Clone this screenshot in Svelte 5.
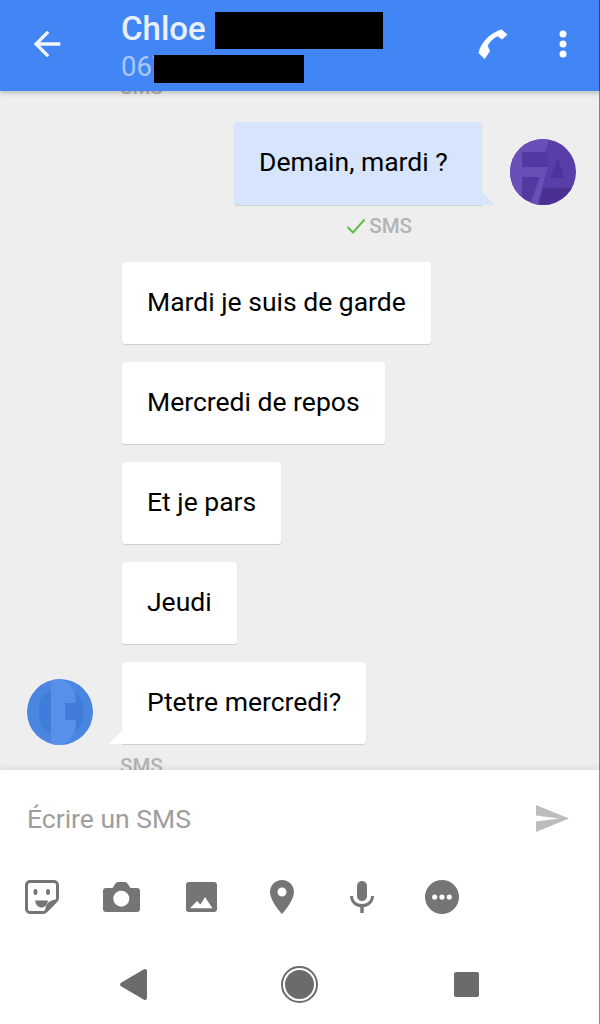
<script lang="ts">
	type Message = {
		text: string;
		mine?: boolean;
		avatar?: boolean;
		status?: string;
		checked?: boolean;
	};

	const messages: Message[] = [
		{ text: 'Demain, mardi ?', mine: true, avatar: true, status: 'SMS', checked: true },
		{ text: 'Mardi je suis de garde' },
		{ text: 'Mercredi de repos' },
		{ text: 'Et je pars' },
		{ text: 'Jeudi' },
		{ text: 'Ptetre mercredi?', avatar: true, status: 'SMS' }
	];
</script>

<div class="screen">
	<header class="topbar">
		<button type="button" class="back" aria-label="Retour">
			<svg viewBox="0 0 24 24" width="40" height="40"><path d="M20 11H7.83l5.59-5.59L12 4l-8 8 8 8 1.41-1.41L7.83 13H20v-2z" /></svg>
		</button>
		<div class="contact">
			<div class="name">Chloe <span class="redacted name-mask"></span></div>
			<div class="number">067<span class="redacted number-mask"></span></div>
		</div>
		<button type="button" class="call" aria-label="Appeler">
			<svg viewBox="0 0 30 31" width="30" height="31"><path d="M0.800 24C2.500 15 11 4.500 23.500 0.800L29.200 5.500 24 10.200 19.500 7C15 9 11.200 13 9.300 17L11.800 22 6.500 29.800z" stroke="#fff" stroke-width="0.600" stroke-linejoin="round" /></svg>
		</button>
		<button type="button" class="more" aria-label="Plus">
			<svg viewBox="0 0 10 28" width="10" height="28"><circle cx="5" cy="4" r="3.500" /><circle cx="5" cy="14" r="3.500" /><circle cx="5" cy="24" r="3.500" /></svg>
		</button>
	</header>

	<main class="thread">
		<div class="status first">SMS</div>
		{#each messages as message}
			<div class="row" class:mine={message.mine}>
				{#if message.avatar && !message.mine}
					<svg class="avatar" viewBox="0 0 66 66" width="66" height="66">
						<rect width="66" height="66" fill="#4a86e0" />
						<rect x="12" y="13" width="44" height="40" rx="14" fill="#3f7cdc" />
						<path d="M24 0h9C44 3 49 12 49 24H38v17h11C49 54 44 63 33 66h-9z" fill="#5790e8" />
					</svg>
				{:else if !message.mine}
					<span class="avatar-space"></span>
				{/if}
				<div class="bubble" class:tail={message.avatar}>{message.text}</div>
				{#if message.avatar && message.mine}
					<svg class="avatar" viewBox="0 0 66 66" width="66" height="66">
						<rect width="66" height="66" fill="#5a3ea8" />
						<path d="M0 0h39L35 13H12v49H0z" fill="#6a4fb8" />
						<path d="M12 13h26v15H12zM12 38h18l-10 24h-8z" fill="#5438a2" />
						<path d="M12 28h26l-3 10H12zM30 38h5l-7 28h-8z" fill="#694eb6" />
						<path d="M48 19l6 20H40z" fill="#4f329b" />
						<path d="M33 49h33v17H28z" fill="#4b2f92" />
					</svg>
				{/if}
			</div>
			{#if message.status}
				<div class="status" class:sent={message.mine} class:last={!message.mine}>
					{#if message.checked}
						<svg viewBox="0 0 20 16" width="20" height="16"><path d="M1.500 9l5.500 5.500L18.500 1.500" fill="none" stroke="#62bd4a" stroke-width="2" /></svg>
					{/if}
					{message.status}
				</div>
			{/if}
		{/each}
	</main>

	<footer class="composer">
		<div class="input-row">
			<span class="placeholder">Écrire un SMS</span>
			<svg class="send" viewBox="0 0 33 27" width="33" height="27"><path d="M0 0l33 13.500L0 27V16.500l23-3-23-3z" /></svg>
		</div>
		<div class="tools">
			<svg viewBox="0 0 34 34" width="34" height="34">
				<path d="M5 1.500h24A3.500 3.500 0 0 1 32.500 5v13c0 1-.5 2-1.200 2.800L21 31.300c-.8.800-1.800 1.200-2.800 1.200H5A3.500 3.500 0 0 1 1.500 29V5A3.500 3.500 0 0 1 5 1.500z" fill="none" stroke="#757575" stroke-width="3" />
				<path d="M32 19.500c-7 0-12 4-12 12.500l3-1 8-8z" />
				<ellipse cx="10.500" cy="12" rx="2" ry="3" /><ellipse cx="23" cy="12" rx="2" ry="3" />
				<path d="M10 20.500h13c-1 5-3.500 7-6.500 7s-5.500-2-6.500-7z" />
			</svg>
			<svg viewBox="0 0 37 30" width="37" height="30"><path fill-rule="evenodd" d="M3 6h6.500l3-4.500A3 3 0 0 1 15 0h7a3 3 0 0 1 2.500 1.500l3 4.500H34a3 3 0 0 1 3 3v18a3 3 0 0 1-3 3H3a3 3 0 0 1-3-3V9a3 3 0 0 1 3-3zm15.300 2.700a8 8 0 1 0 0 16 8 8 0 0 0 0-16z" /></svg>
			<svg viewBox="0 0 31 30" width="31" height="30"><path fill-rule="evenodd" d="M3 0h25a3 3 0 0 1 3 3v24a3 3 0 0 1-3 3H3a3 3 0 0 1-3-3V3a3 3 0 0 1 3-3zm1 26.300h22.500L19 15l-4.500 7.500L11 19z" /></svg>
			<svg viewBox="0 0 24 34" width="24" height="34"><path fill-rule="evenodd" d="M12 0C5.400 0 0 5.300 0 12c0 9 12 22 12 22s12-13 12-22c0-6.700-5.400-12-12-12zm0 16.500a4.500 4.500 0 1 1 0-9 4.500 4.500 0 0 1 0 9z" /></svg>
			<svg viewBox="0 0 24 32" width="24" height="32"><path d="M12 20c2.800 0 5-2.200 5-5V5c0-2.800-2.200-5-5-5S7 2.200 7 5v10c0 2.800 2.200 5 5 5z" /><path d="M21 15c0 5-4 8-9 8s-9-3-9-8H0c0 5.800 4.500 10.500 10.300 11.200V32h3.400v-5.800C19.500 25.500 24 20.800 24 15z" /></svg>
			<svg viewBox="0 0 34 34" width="34" height="34"><path fill-rule="evenodd" d="M17 0a17 17 0 1 1 0 34 17 17 0 0 1 0-34zM9.700 14.500a2.600 2.600 0 1 0 0 5.200 2.600 2.600 0 0 0 0-5.200zm7.300 0a2.600 2.600 0 1 0 0 5.200 2.600 2.600 0 0 0 0-5.200zm7.300 0a2.600 2.600 0 1 0 0 5.200 2.600 2.600 0 0 0 0-5.200z" /></svg>
		</div>
		<nav class="navbar">
			<svg viewBox="0 0 27 31" width="27" height="31"><path d="M25 0a2 2 0 0 1 2 2v27a2 2 0 0 1-3 1.700L1 17.200a2 2 0 0 1 0-3.400L24 .3A2 2 0 0 1 25 0z" /></svg>
			<svg viewBox="0 0 37 37" width="37" height="37"><circle cx="18.500" cy="18.500" r="17.500" fill="none" stroke="#6b6b6b" stroke-width="2" /><circle cx="18.500" cy="18.500" r="14.500" /></svg>
			<svg class="recents" viewBox="0 0 25 25" width="25" height="25"><rect width="25" height="25" rx="2" /></svg>
		</nav>
	</footer>
</div>

<style>
	:global(body) {
		background: #eee;
	}

	.screen {
		display: flex;
		flex-direction: column;
		font-family: Roboto, sans-serif;
		height: 1024px;
		overflow: hidden;
		position: relative;
		width: 600px;
	}

	/* the capture has a thin dark line down its right edge */
	.screen::after {
		background: rgba(0, 0, 0, 0.45);
		bottom: 0;
		content: '';
		position: absolute;
		right: 0;
		top: 0;
		width: 1px;
		z-index: 2;
	}

	.topbar {
		align-items: flex-start;
		background: #4285f4;
		box-shadow: 0 2px 5px rgba(0, 0, 0, 0.22);
		display: flex;
		flex: none;
		height: 91px;
		position: relative;
		z-index: 1;
	}

	button {
		background: none;
		border: 0;
		display: flex;
		padding: 0;
	}

	button svg {
		fill: #fff;
	}

	.back {
		margin: 24px 0 0 27px;
		opacity: 0.92;
	}

	.contact {
		flex: 1;
		margin-left: 54px;
		padding-top: 12px;
	}

	.name {
		color: #e8f0fe;
		display: flex;
		font-size: 33px;
		font-weight: 500;
		gap: 9px;
		height: 37px;
		line-height: 33px;
	}

	.number {
		color: #a9c8fb;
		font-size: 27.5px;
		height: 28px;
		line-height: 24px;
		margin-top: 6px;
		position: relative;
	}

	.redacted {
		background: #000;
		display: block;
	}

	.name-mask {
		height: 37px;
		width: 168px;
	}

	.number-mask {
		height: 28px;
		left: 33px;
		position: absolute;
		top: 0;
		width: 150px;
	}

	.call {
		margin: 29px 50px 0 0;
	}

	.more {
		margin: 30px 32px 0 0;
	}

	.thread {
		display: flex;
		flex: 1;
		flex-direction: column;
		justify-content: flex-end;
		min-height: 0;
		overflow: hidden;
	}

	.row {
		align-items: flex-end;
		display: flex;
		flex: none;
		gap: 29px;
		margin-bottom: 18px;
		padding: 0 27px;
	}

	.row.mine {
		gap: 28px;
		justify-content: flex-end;
		padding: 0 24px 0 0;
	}

	.avatar {
		clip-path: circle(50%);
		flex: none;
		margin-bottom: -1px;
	}

	.mine .avatar {
		margin-bottom: 0;
	}

	.avatar-space {
		flex: none;
		width: 66px;
	}

	.bubble {
		background: #fff;
		border-radius: 3px;
		box-shadow: 0 1px 1px rgba(0, 0, 0, 0.14);
		color: #000;
		font-size: 26.500px;
		line-height: 30px;
		padding: 25px 25px 27px;
		position: relative;
	}

	.bubble.tail {
		border-bottom-left-radius: 0;
	}

	.mine .bubble {
		background: #d7e5fc;
		border-bottom-left-radius: 3px;
		border-bottom-right-radius: 0;
		box-sizing: border-box;
		min-width: 248px;
		padding-bottom: 28px;
	}

	.bubble.tail::after {
		border-bottom: 13px solid #fff;
		border-left: 13px solid transparent;
		bottom: 0;
		content: '';
		left: -13px;
		position: absolute;
	}

	.mine .bubble.tail::after {
		border-bottom-color: #d7e5fc;
		border-left: 0;
		border-right: 13px solid transparent;
		left: auto;
		right: -13px;
	}

	.status {
		align-items: center;
		color: #b3b3b3;
		display: flex;
		flex: none;
		font-size: 20.500px;
		font-weight: 500;
		gap: 3px;
		height: 22px;
		margin-left: 120px;
	}

	.status.first {
		margin-bottom: 24px;
	}

	.status.sent {
		justify-content: flex-end;
		margin: -8px 188px 25px 0;
	}

	.status.last {
		margin-bottom: -7px;
		margin-top: -7px;
	}

	.composer {
		background: #fff;
		box-shadow: 0 -2px 6px rgba(0, 0, 0, 0.08);
		flex: none;
		height: 254px;
		position: relative;
	}

	.input-row {
		align-items: center;
		display: flex;
		height: 96px;
		justify-content: space-between;
		padding: 0 31px 0 27px;
	}

	.placeholder {
		color: #9e9e9e;
		font-size: 26.500px;
	}

	.send {
		fill: #bdbdbd;
	}

	.tools {
		align-items: center;
		display: grid;
		fill: #757575;
		grid-template-columns: repeat(6, 80px);
		height: 62px;
		justify-items: center;
		padding-left: 1.500px;
	}

	.navbar {
		align-items: center;
		box-sizing: border-box;
		display: flex;
		fill: #6b6b6b;
		gap: 134px;
		height: 96px;
		padding: 16px 0 0 120px;
	}

	.recents {
		margin-left: 2px;
	}
</style>
